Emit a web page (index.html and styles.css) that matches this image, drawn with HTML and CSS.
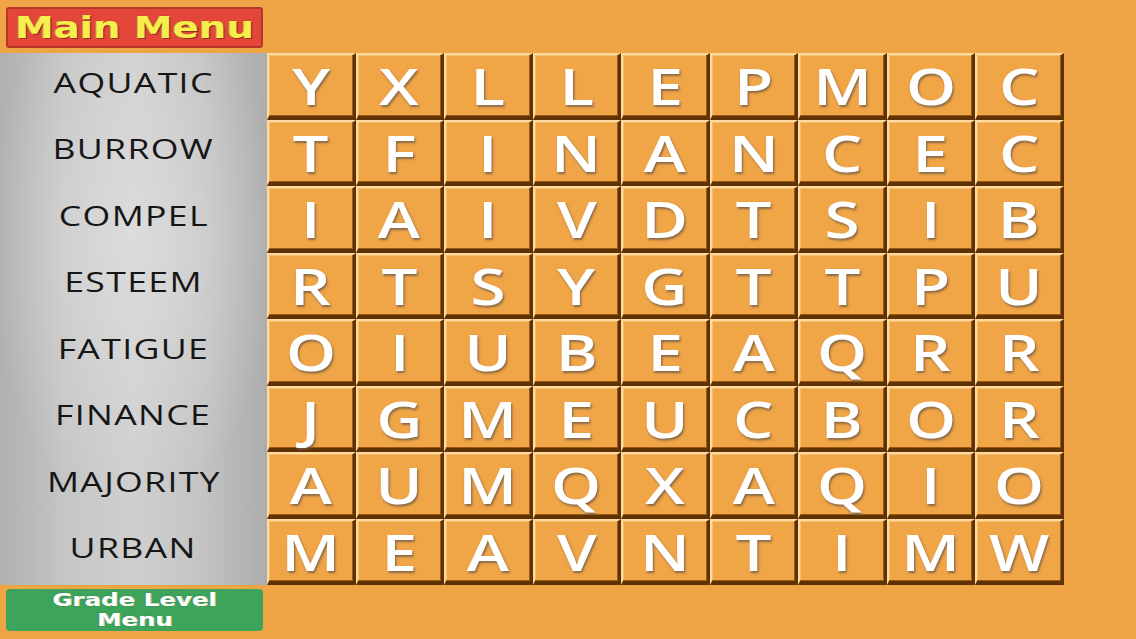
FILE: index.html
```html
<!DOCTYPE html>
<html>
<head>
<meta charset="utf-8">
<link rel="stylesheet" href="styles.css">
</head>
<body>
<div class="page">
  <div class="topbar">
    <div class="btn-main"><span class="btn-text">Main Menu</span></div>
  </div>
  <div class="middle">
    <div class="words">
      <div class="word"><span>AQUATIC</span></div>
      <div class="word"><span>BURROW</span></div>
      <div class="word"><span>COMPEL</span></div>
      <div class="word"><span>ESTEEM</span></div>
      <div class="word"><span>FATIGUE</span></div>
      <div class="word"><span>FINANCE</span></div>
      <div class="word"><span>MAJORITY</span></div>
      <div class="word"><span>URBAN</span></div>
    </div>
    <div class="grid">
      <div class="tile"><span>Y</span></div><div class="tile"><span>X</span></div><div class="tile"><span>L</span></div><div class="tile"><span>L</span></div><div class="tile"><span>E</span></div><div class="tile"><span>P</span></div><div class="tile"><span>M</span></div><div class="tile"><span>O</span></div><div class="tile"><span>C</span></div>
      <div class="tile"><span>T</span></div><div class="tile"><span>F</span></div><div class="tile"><span>I</span></div><div class="tile"><span>N</span></div><div class="tile"><span>A</span></div><div class="tile"><span>N</span></div><div class="tile"><span>C</span></div><div class="tile"><span>E</span></div><div class="tile"><span>C</span></div>
      <div class="tile"><span>I</span></div><div class="tile"><span>A</span></div><div class="tile"><span>I</span></div><div class="tile"><span>V</span></div><div class="tile"><span>D</span></div><div class="tile"><span>T</span></div><div class="tile"><span>S</span></div><div class="tile"><span>I</span></div><div class="tile"><span>B</span></div>
      <div class="tile"><span>R</span></div><div class="tile"><span>T</span></div><div class="tile"><span>S</span></div><div class="tile"><span>Y</span></div><div class="tile"><span>G</span></div><div class="tile"><span>T</span></div><div class="tile"><span>T</span></div><div class="tile"><span>P</span></div><div class="tile"><span>U</span></div>
      <div class="tile"><span>O</span></div><div class="tile"><span>I</span></div><div class="tile"><span>U</span></div><div class="tile"><span>B</span></div><div class="tile"><span>E</span></div><div class="tile"><span>A</span></div><div class="tile"><span>Q</span></div><div class="tile"><span>R</span></div><div class="tile"><span>R</span></div>
      <div class="tile"><span>J</span></div><div class="tile"><span>G</span></div><div class="tile"><span>M</span></div><div class="tile"><span>E</span></div><div class="tile"><span>U</span></div><div class="tile"><span>C</span></div><div class="tile"><span>B</span></div><div class="tile"><span>O</span></div><div class="tile"><span>R</span></div>
      <div class="tile"><span>A</span></div><div class="tile"><span>U</span></div><div class="tile"><span>M</span></div><div class="tile"><span>Q</span></div><div class="tile"><span>X</span></div><div class="tile"><span>A</span></div><div class="tile"><span>Q</span></div><div class="tile"><span>I</span></div><div class="tile"><span>O</span></div>
      <div class="tile"><span>M</span></div><div class="tile"><span>E</span></div><div class="tile"><span>A</span></div><div class="tile"><span>V</span></div><div class="tile"><span>N</span></div><div class="tile"><span>T</span></div><div class="tile"><span>I</span></div><div class="tile"><span>M</span></div><div class="tile"><span>W</span></div>
    </div>
  </div>
  <div class="bottombar">
    <div class="btn-grade">
      <span class="btn-text2">Grade Level</span>
      <span class="btn-text2">Menu</span>
    </div>
  </div>
</div>
</body>
</html>
```

FILE: styles.css
```css
html, body {
  margin: 0;
  padding: 0;
}
body {
  background: #efa445;
  width: 1136px;
  height: 639px;
  overflow: hidden;
}
.page {
  display: flex;
  flex-direction: column;
  width: 1136px;
  height: 639px;
}
.topbar {
  height: 53px;
  box-sizing: border-box;
  padding: 7px 0 0 6px;
}
.btn-main {
  width: 257px;
  height: 41px;
  box-sizing: border-box;
  background: #e4463a;
  border: 2px solid #b8352a;
  border-radius: 3px;
  display: flex;
  align-items: center;
  justify-content: center;
}
.btn-text {
  display: inline-block;
  font-family: "DejaVu Sans", sans-serif;
  font-weight: bold;
  font-size: 30px;
  color: #f7ee4e;
  transform: scaleX(1.29);
  text-shadow: 0 0 1px #8a2a1a, 1px 1px 0 #9a3020, 0.5px 0 0 #f7ee4e, -0.5px 0 0 #f7ee4e;
  line-height: 1;
  margin-top: 1px;
}
.middle {
  display: flex;
  height: 532px;
}
.words {
  width: 267px;
  height: 532px;
  background:
    radial-gradient(ellipse 55% 50% at 50% 35%, rgba(225,225,225,0.7), rgba(225,225,225,0) 100%),
    linear-gradient(90deg, #b0b0b0 0%, #c6c6c6 25%, #cfcfcf 50%, #c4c4c4 75%, #acacac 100%);
  display: grid;
  grid-template-rows: repeat(8, 1fr);
}
.word {
  display: flex;
  align-items: center;
  justify-content: center;
  padding-bottom: 8px;
}
.word span {
  display: inline-block;
  font-family: "Open Sans", sans-serif;
  font-size: 27px;
  color: #161616;
  letter-spacing: 1px;
  transform: scaleX(1.32);
}
.grid {
  width: 797px;
  height: 532px;
  display: grid;
  grid-template-columns: repeat(9, 1fr);
  grid-template-rows: repeat(8, 1fr);
}
.tile {
  box-sizing: border-box;
  background: #f0a547;
  border-top: 2px solid #ffd9a2;
  border-left: 2px solid #ffd9a2;
  border-right: 3px solid #5e3205;
  border-bottom: 4px solid #5e3205;
  box-shadow: inset -1px -1px 0 #9a5a14, inset 1px 1px 0 #f7bd6a;
  display: flex;
  align-items: center;
  justify-content: center;
}
.tile span {
  display: inline-block;
  font-family: "Open Sans", sans-serif;
  font-weight: 600;
  font-size: 51px;
  line-height: 1;
  color: #ffffff;
  transform: scaleX(1.25);
  text-shadow: 1px 2px 2px rgba(110, 90, 70, 0.8);
  margin-top: 1px;
}
.bottombar {
  flex: 1;
  box-sizing: border-box;
  padding: 4px 0 0 6px;
}
.btn-grade {
  width: 257px;
  height: 42px;
  box-sizing: border-box;
  background: #3ea45b;
  border-radius: 4px;
  display: flex;
  flex-direction: column;
  align-items: center;
  justify-content: center;
  text-align: center;
}
.btn-text2 {
  display: block;
  font-family: "DejaVu Sans", sans-serif;
  font-weight: bold;
  font-size: 18px;
  line-height: 20px;
  height: 20px;
  color: #ffffff;
  transform: scaleX(1.36);
  text-shadow: 0 0 1px #2a6a3a, 0.5px 0 0 #fff;
}
```
